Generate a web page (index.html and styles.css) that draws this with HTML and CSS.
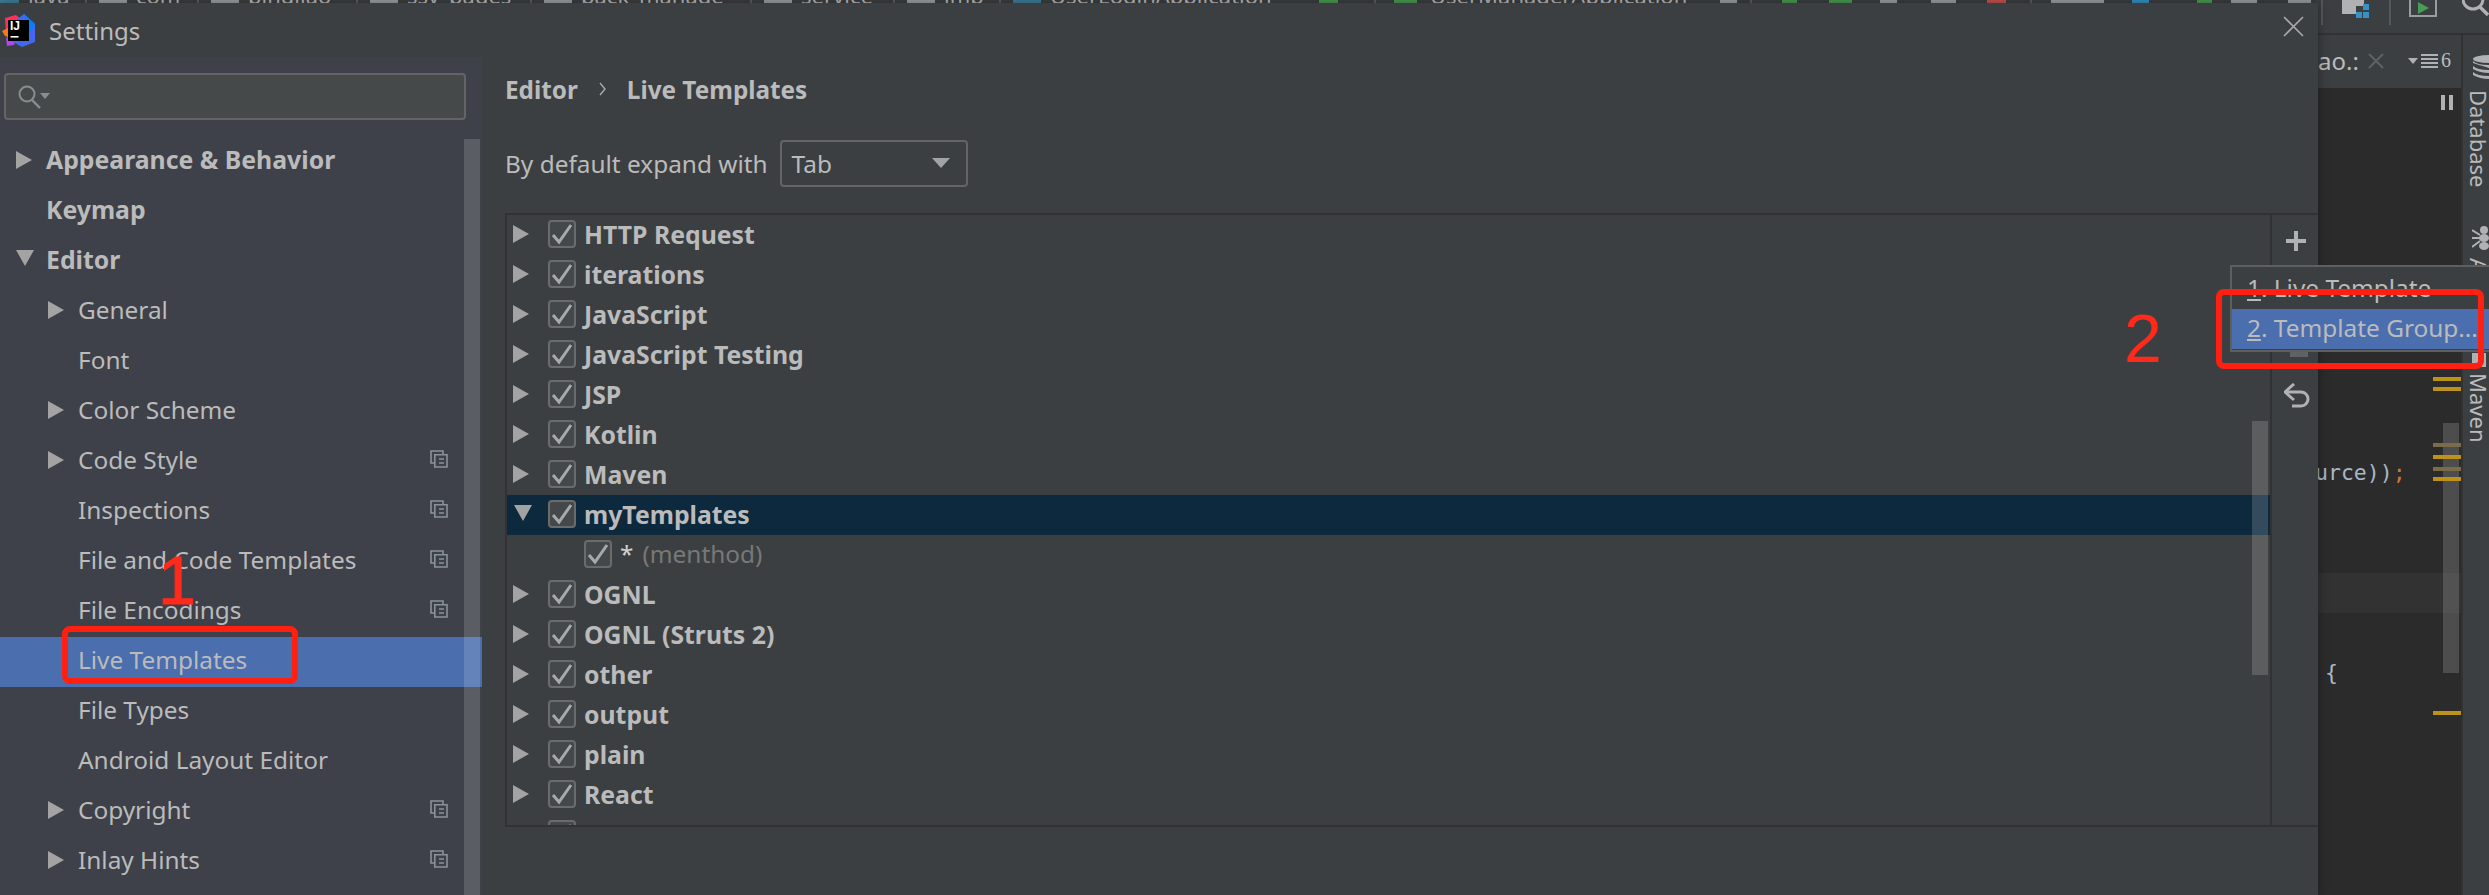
FILE: index.html
```html
<!DOCTYPE html>
<html lang="en">
<head>
    <meta charset="UTF-8">
    <title>Settings</title>
    <link rel="stylesheet" href="styles.css">
</head>
<body>
    <!-- Shared icons -->
    <svg class="sprite" width="0" height="0">
        <symbol id="check" viewBox="0 0 24 24">
            <path d="M3 13 L9 20 L21 3" fill="none" stroke="#a9a9a9" stroke-width="3"/>
        </symbol>
        <symbol id="project" viewBox="0 0 18 18">
            <path d="M13 4 V1 H1 V13 H4" fill="none" stroke="#8a9299" stroke-width="1.6"/>
            <path d="M4.8 4.8 H17 V17 H4.8 Z" fill="none" stroke="#8a9299" stroke-width="1.6"/>
            <path d="M9 9 H14 M9 13 H14" stroke="#8a9299" stroke-width="1.6"/>
        </symbol>
    </svg>

    <!-- IDE behind the dialog -->
    <div class="ide-toolbar">
        <span class="crumb-icon teal"></span>
        <span class="crumb-text wide-1">java</span>
        <span class="crumb-sep"></span>
        <span class="crumb-icon"></span>
        <span class="crumb-text wide-2">com</span>
        <span class="crumb-sep"></span>
        <span class="crumb-icon"></span>
        <span class="crumb-text wide-3">pingjiao</span>
        <span class="crumb-sep"></span>
        <span class="crumb-icon"></span>
        <span class="crumb-text wide-4">ssy_pages</span>
        <span class="crumb-sep"></span>
        <span class="crumb-icon"></span>
        <span class="crumb-text wide-5">back_manage</span>
        <span class="crumb-sep"></span>
        <span class="crumb-icon"></span>
        <span class="crumb-text wide-6">service</span>
        <span class="crumb-sep"></span>
        <span class="crumb-icon"></span>
        <span class="crumb-text wide-7">impl</span>
        <span class="crumb-sep"></span>
        <span class="crumb-icon teal"></span>
        <span class="crumb-text wide-8">UserLoginApplication</span>

        <span class="bit bit-run"></span>
        <span class="crumb-sep sep-run"></span>
        <span class="bit bit-config"></span>
        <span class="crumb-text wide-9">UserManagerApplication</span>
        <span class="bit bit-drop"></span>
        <span class="crumb-sep sep-drop"></span>
        <span class="bit bit-play"></span>
        <span class="bit bit-debug"></span>
        <span class="bit bit-cover"></span>
        <span class="bit bit-profile"></span>
        <span class="bit bit-stop"></span>
        <span class="crumb-sep sep-stop"></span>
        <span class="bit bit-vcs"></span>
        <span class="bit bit-update"></span>
        <span class="bit bit-commit"></span>
        <span class="bit bit-history"></span>
        <span class="bit bit-revert"></span>

        <div class="toolbar-right">
            <span class="tool-sep first-sep"></span>
            <svg class="toolbar-icon" width="27" height="18" viewBox="0 0 27 18">
                <path d="M0 0 H22 V6 H14 V14 H0 Z" fill="#afb1b3"/>
                <rect x="21" y="4" width="6" height="6" fill="#3592c4"/>
                <rect x="14" y="12" width="6" height="6" fill="#3592c4"/>
                <rect x="21" y="12" width="6" height="6" fill="#3592c4"/>
            </svg>
            <span class="tool-sep second-sep"></span>
            <svg class="toolbar-icon run-icon" width="28" height="17" viewBox="0 0 28 17">
                <path d="M1 0 V16 H27 V0" fill="none" stroke="#9a9c9e" stroke-width="2"/>
                <path d="M9 2 L20 8 L9 14 Z" fill="#499c54"/>
            </svg>
            <svg class="toolbar-icon search-icon" width="27" height="16" viewBox="0 0 27 16">
                <circle cx="11" cy="-1" r="10" fill="none" stroke="#afb1b3" stroke-width="3"/>
                <path d="M18 7 L26 15" stroke="#afb1b3" stroke-width="3.4"/>
            </svg>
        </div>
    </div>

    <div class="ide-main">
        <div class="editor-column">
            <div class="editor-tabs">
                <span class="tab-name">ao.:</span>
                <svg class="tab-close" width="16" height="16" viewBox="0 0 16 16">
                    <path d="M1 1 L15 15 M15 1 L1 15" stroke="#5f6264" stroke-width="2"/>
                </svg>
                <span class="tab-list-arrow"></span>
                <svg class="tab-list" width="17" height="14" viewBox="0 0 17 14">
                    <path d="M0 1 H17 M0 5 H17 M0 9 H17 M0 13 H17" stroke="#afb1b3" stroke-width="2"/>
                </svg>
                <span class="tab-count">6</span>
            </div>
            <div class="editor">
                <div class="code-line first-line"><span class="code-text">urce))</span><span class="code-semi">;</span></div>
                <div class="code-line"></div>
                <div class="code-line"></div>
                <div class="code-line caret-line"></div>
                <div class="code-line"></div>
                <div class="code-line brace-line"><span class="code-text">{</span></div>

                <span class="pause-icon"></span>
                <span class="editor-scroll"></span>
                <span class="mark mark-1"></span>
                <span class="mark mark-2"></span>
                <span class="mark mark-3"></span>
                <span class="mark mark-4"></span>
                <span class="mark mark-5"></span>
                <span class="mark mark-6"></span>
                <span class="mark mark-7"></span>
            </div>
        </div>
        <div class="tool-strip">
            <svg class="strip-db" width="17" height="25" viewBox="0 0 17 25">
                <ellipse cx="17" cy="4" rx="16" ry="4" fill="#afb1b3"/>
                <path d="M1 8 Q17 13 17 13 V10 Q5 10 1 6 Z M1 14 Q8 18 17 18 V15 Q5 15 1 11 Z M1 20 Q8 24 17 24 V21 Q5 21 1 17 Z" fill="#afb1b3"/>
            </svg>
            <span class="strip-label strip-database">Database</span>
            <svg class="strip-ant" width="17" height="25" viewBox="0 0 17 25">
                <circle cx="12" cy="5" r="4" fill="#afb1b3"/>
                <ellipse cx="12" cy="13" rx="5" ry="4" fill="#afb1b3"/>
                <ellipse cx="12" cy="21" rx="5" ry="4" fill="#afb1b3"/>
                <path d="M0 5 L8 10 M0 13 H8 M0 22 L8 16" stroke="#afb1b3" stroke-width="2"/>
            </svg>
            <span class="strip-label strip-ant-label">Ant</span>
            <span class="strip-maven-icon"></span>
            <span class="strip-label strip-maven">Maven</span>
        </div>
    </div>

    <!-- Settings dialog -->
    <div class="dialog">
        <div class="dialog-title">
            <svg class="app-logo" width="33" height="33" viewBox="0 0 33 33">
                <path d="M3 4 L14 1 L20 6 L9 26 L6 30 L4 18 Z" fill="#fe315d"/>
                <path d="M0 17 L6 14 L10 24 L3 22 Z" fill="#f97a12"/>
                <path d="M5 32 L4 24 L14 26 L12 31 Z" fill="#b345f1"/>
                <path d="M14 6 L22 0 L33 10 L33 28 L20 33 L11 28 Z" fill="#4168f0"/>
                <path d="M22 0 L33 10 L28 18 Z" fill="#087cfa"/>
                <rect x="6" y="6" width="21" height="21" fill="#000"/>
                <text class="logo-text" x="8" y="16">IJ</text>
                <rect x="8.5" y="22" width="8" height="1.6" fill="#fff"/>
            </svg>
            <span class="dialog-name">Settings</span>
            <svg class="dialog-close" width="21" height="21" viewBox="0 0 21 21">
                <path d="M1 1 L20 20 M20 1 L1 20" stroke="#a6a8aa" stroke-width="1.6"/>
            </svg>
        </div>

        <div class="dialog-body">
            <div class="sidebar">
                <div class="search-box">
                    <svg width="33" height="24" viewBox="0 0 33 24">
                        <circle cx="9" cy="9" r="7.5" fill="none" stroke="#8a8d8f" stroke-width="2"/>
                        <path d="M14 15 L22 23" stroke="#8a8d8f" stroke-width="2.4"/>
                        <path d="M22 8 H32 L27 14 Z" fill="#8a8d8f"/>
                    </svg>
                </div>
                <ul class="tree">
                    <li class="tree-row top-level"><i class="arrow"></i><span class="bold">Appearance &amp; Behavior</span></li>
                    <li class="tree-row top-level"><span class="bold">Keymap</span></li>
                    <li class="tree-row top-level"><i class="arrow open"></i><span class="bold">Editor</span></li>
                    <li class="tree-row"><i class="arrow"></i><span>General</span></li>
                    <li class="tree-row"><span>Font</span></li>
                    <li class="tree-row"><i class="arrow"></i><span>Color Scheme</span></li>
                    <li class="tree-row"><i class="arrow"></i><span>Code Style</span><svg class="project-icon"><use href="#project"/></svg></li>
                    <li class="tree-row"><span>Inspections</span><svg class="project-icon"><use href="#project"/></svg></li>
                    <li class="tree-row"><span>File and Code Templates</span><svg class="project-icon"><use href="#project"/></svg></li>
                    <li class="tree-row"><span>File Encodings</span><svg class="project-icon"><use href="#project"/></svg></li>
                    <li class="tree-row selected"><span>Live Templates</span></li>
                    <li class="tree-row"><span>File Types</span></li>
                    <li class="tree-row"><span>Android Layout Editor</span></li>
                    <li class="tree-row"><i class="arrow"></i><span>Copyright</span><svg class="project-icon"><use href="#project"/></svg></li>
                    <li class="tree-row"><i class="arrow"></i><span>Inlay Hints</span><svg class="project-icon"><use href="#project"/></svg></li>
                </ul>
                <div class="sidebar-scroll"></div>
            </div>

            <div class="content">
                <div class="breadcrumb">
                    <span class="bold">Editor</span>
                    <svg width="7" height="14" viewBox="0 0 7 14">
                        <path d="M1 1 L6 7 L1 13" fill="none" stroke="#a8aaac" stroke-width="1.4"/>
                    </svg>
                    <span class="bold">Live Templates</span>
                </div>
                <div class="expand-row">
                    <span>By default expand with</span>
                    <div class="select-box"><span>Tab</span><i class="select-arrow"></i></div>
                </div>

                <div class="panel">
                    <div class="group-list">
                        <div class="group-row"><i class="arrow"></i><span class="check"><svg><use href="#check"/></svg></span><span class="bold">HTTP Request</span></div>
                        <div class="group-row"><i class="arrow"></i><span class="check"><svg><use href="#check"/></svg></span><span class="bold">iterations</span></div>
                        <div class="group-row"><i class="arrow"></i><span class="check"><svg><use href="#check"/></svg></span><span class="bold">JavaScript</span></div>
                        <div class="group-row"><i class="arrow"></i><span class="check"><svg><use href="#check"/></svg></span><span class="bold">JavaScript Testing</span></div>
                        <div class="group-row"><i class="arrow"></i><span class="check"><svg><use href="#check"/></svg></span><span class="bold">JSP</span></div>
                        <div class="group-row"><i class="arrow"></i><span class="check"><svg><use href="#check"/></svg></span><span class="bold">Kotlin</span></div>
                        <div class="group-row"><i class="arrow"></i><span class="check"><svg><use href="#check"/></svg></span><span class="bold">Maven</span></div>
                        <div class="group-row active"><i class="arrow open"></i><span class="check"><svg><use href="#check"/></svg></span><span class="bold">myTemplates</span></div>
                        <div class="group-row child"><span class="check"><svg><use href="#check"/></svg></span><span class="star">*</span><span class="muted">(menthod)</span></div>
                        <div class="group-row"><i class="arrow"></i><span class="check"><svg><use href="#check"/></svg></span><span class="bold">OGNL</span></div>
                        <div class="group-row"><i class="arrow"></i><span class="check"><svg><use href="#check"/></svg></span><span class="bold">OGNL (Struts 2)</span></div>
                        <div class="group-row"><i class="arrow"></i><span class="check"><svg><use href="#check"/></svg></span><span class="bold">other</span></div>
                        <div class="group-row"><i class="arrow"></i><span class="check"><svg><use href="#check"/></svg></span><span class="bold">output</span></div>
                        <div class="group-row"><i class="arrow"></i><span class="check"><svg><use href="#check"/></svg></span><span class="bold">plain</span></div>
                        <div class="group-row"><i class="arrow"></i><span class="check"><svg><use href="#check"/></svg></span><span class="bold">React</span></div>
                        <div class="group-row"><i class="arrow"></i><span class="check"><svg><use href="#check"/></svg></span><span class="bold">RESTful Web Service</span></div>
                        <div class="list-scroll"></div>
                    </div>
                    <div class="panel-tools">
                        <svg class="tool-plus" width="20" height="20" viewBox="0 0 20 20">
                            <path d="M10 0 V20 M0 10 H20" stroke="#afb1b3" stroke-width="4"/>
                        </svg>
                        <span class="tool-minus"></span>
                        <svg class="tool-undo" width="26" height="26" viewBox="0 0 26 26">
                            <path d="M3 9 H17 A 7 7 0 0 1 17 23 H8" fill="none" stroke="#afb1b3" stroke-width="3"/>
                            <path d="M10 1 L1 9 L10 17" fill="none" stroke="#afb1b3" stroke-width="3"/>
                        </svg>
                    </div>
                </div>
            </div>
        </div>
    </div>

    <!-- Add menu -->
    <div class="add-menu">
        <div class="menu-item"><u>1</u>. Live Template</div>
        <div class="menu-item current"><u>2</u>. Template Group...</div>
    </div>

    <!-- Red annotations -->
    <span class="note note-one">1</span>
    <span class="note note-two">2</span>
    <div class="note-box box-one"></div>
    <div class="note-box box-two"></div>
</body>
</html>
```

FILE: styles.css
```css
/* Reset */
* {
    margin: 0;
    padding: 0;
    box-sizing: border-box;
}
body {
    position: relative;
    width: 2489px;
    height: 895px;
    overflow: hidden;
    background-color: #3c3f41;
    color: #bbbbbb;
    font-family: "Noto Sans", "Open Sans", sans-serif;
    font-size: 24.4px;
}
.sprite {
    position: absolute;
}
.bold {
    font-size: 24.8px;
    font-weight: 700;
}

/* IDE toolbar, mostly covered by the dialog */
.ide-toolbar {
    display: flex;
    align-items: flex-start;
    height: 35px;
    border-bottom: 2px solid #323232;
    overflow: hidden;
}
.crumb-icon {
    flex: none;
    width: 28px;
    height: 20px;
    background-color: #9da0a2;
}
.crumb-icon.teal {
    background-color: #3f7f9c;
}
.crumb-icon:first-child {
    width: 19px;
}
.crumb-text {
    flex: none;
    margin: -20px 0 0 9px;
    font-size: 22px;
    line-height: 30px;
    white-space: nowrap;
    overflow: hidden;
}
.wide-1 { width: 42px; }
.wide-2 { width: 46px; }
.wide-3 { width: 93px; }
.wide-4 { width: 108px; }
.wide-5 { width: 154px; }
.wide-6 { width: 77px; }
.wide-7 { width: 40px; }
.wide-8 { width: 224px; }
.wide-9 { width: 269px; margin-left: 13px; }
.crumb-sep {
    flex: none;
    width: 2px;
    height: 4px;
    margin: 0 12px 0 15px;
    background-color: #5c5f61;
}
.bit {
    flex: none;
    height: 8px;
    background-color: #9da0a2;
}
.bit-run { width: 19px; margin-left: 45px; background-color: #499c54; }
.sep-run { margin: 0 18px 0 36px; }
.bit-config { width: 23px; background-color: #499c54; }
.bit-drop { width: 17px; margin-left: 21px; height: 3px; }
.sep-drop { margin: 0 30px 0 13px; }
.bit-play { width: 15px; background-color: #499c54; }
.bit-debug { width: 23px; margin-left: 32px; background-color: #499c54; }
.bit-cover { width: 17px; margin-left: 28px; }
.bit-profile { width: 25px; margin-left: 34px; height: 4px; }
.bit-stop { width: 19px; margin-left: 31px; background-color: #c75450; }
.sep-stop { margin: 0 19px 0 24px; }
.bit-vcs { width: 53px; height: 4px; }
.bit-update { width: 17px; margin-left: 28px; background-color: #3592c4; }
.bit-commit { width: 15px; margin-left: 48px; background-color: #499c54; }
.bit-history { width: 26px; margin-left: 19px; height: 4px; }
.bit-revert { width: 23px; margin-left: 31px; height: 4px; }
.toolbar-right {
    display: flex;
    align-items: flex-start;
    margin-left: auto;
}
.tool-sep {
    width: 2px;
    height: 25px;
    background-color: #555759;
}
.first-sep {
    margin-right: 19px;
}
.second-sep {
    margin: 0 18px 0 20px;
}
.run-icon {
    margin-right: 25px;
}

/* Editor column and tool window strip */
.ide-main {
    display: flex;
    justify-content: flex-end;
    height: 860px;
}
.editor-column {
    display: flex;
    flex-direction: column;
    width: 143px;
}
.editor-tabs {
    display: flex;
    align-items: center;
    height: 53px;
    padding-bottom: 2px;
    font-size: 24px;
}
.tab-name {
    width: 50px;
}
.tab-close {
    margin-right: 24px;
}
.tab-list-arrow {
    width: 0;
    height: 0;
    margin-right: 3px;
    border-left: 5px solid transparent;
    border-right: 5px solid transparent;
    border-top: 6px solid #afb1b3;
}
.tab-count {
    margin-left: 3px;
    font-family: "Liberation Serif", serif;
    font-size: 20px;
}
.editor {
    position: relative;
    flex: 1;
    padding-top: 365px;
    background-color: #2b2b2b;
    font-family: "DejaVu Sans Mono", monospace;
    font-size: 21.5px;
}
.code-line {
    height: 40px;
    line-height: 40px;
    white-space: nowrap;
}
.first-line {
    margin-left: -3px;
}
.code-text {
    color: #a9b7c6;
}
.code-semi {
    color: #cc7832;
}
.caret-line {
    background-color: #323232;
}
.brace-line {
    padding-left: 7px;
}
.pause-icon {
    position: absolute;
    top: 7px;
    left: 123px;
    width: 12px;
    height: 15px;
    border-left: 4px solid #afb1b3;
    border-right: 4px solid #afb1b3;
}
.editor-scroll {
    position: absolute;
    top: 335px;
    left: 125px;
    width: 16px;
    height: 250px;
    background-color: rgba(255, 255, 255, 0.16);
}
.mark {
    position: absolute;
    left: 115px;
    width: 28px;
    height: 4px;
    background-color: #be9117;
}
.mark-1 { top: 289px; }
.mark-2 { top: 299px; }
.mark-3 { top: 355px; background-color: #7a6c4a; }
.mark-4 { top: 367px; }
.mark-5 { top: 379px; background-color: #7a6c4a; }
.mark-6 { top: 389px; }
.mark-7 { top: 623px; }
.tool-strip {
    display: flex;
    flex-direction: column;
    width: 28px;
    padding-left: 9px;
    border-left: 2px solid #323232;
    overflow: hidden;
}
.strip-db {
    flex: none;
    margin-top: 20px;
}
.strip-label {
    flex: none;
    writing-mode: vertical-rl;
    font-size: 22px;
    line-height: 20px;
}
.strip-database {
    margin-top: 10px;
}
.strip-ant {
    flex: none;
    margin-top: 37px;
}
.strip-ant-label {
    margin-top: 8px;
}
.strip-maven-icon {
    flex: none;
    width: 14px;
    height: 14px;
    margin-top: 60px;
    background-color: #afb1b3;
}
.strip-maven {
    margin-top: 6px;
}

/* Dialog */
.dialog {
    position: absolute;
    top: 3px;
    left: 0;
    display: flex;
    flex-direction: column;
    width: 2318px;
    height: 892px;
    background-color: #3c3f41;
    box-shadow: 0 0 10px rgba(0, 0, 0, 0.4);
}
.dialog-title {
    display: flex;
    align-items: center;
    flex: none;
    height: 54px;
    padding-left: 2px;
}
.dialog-name {
    margin-left: 14px;
    font-size: 24px;
}
.dialog-close {
    margin-left: auto;
    margin-right: 14px;
    margin-top: -8px;
}
.dialog-body {
    display: flex;
    flex: 1;
    min-height: 0;
}

/* Sidebar */
.sidebar {
    position: relative;
    flex: none;
    width: 482px;
    background-color: #3e4149;
}
.search-box {
    display: flex;
    align-items: center;
    width: 462px;
    height: 47px;
    margin: 16px 0 17px 4px;
    padding-left: 12px;
    background-color: #45494a;
    border: 2px solid #646464;
    border-radius: 4px;
}
.tree {
    list-style: none;
}
.tree-row {
    position: relative;
    display: flex;
    align-items: center;
    height: 50px;
    padding: 0 0 6px 78px;
}
.tree-row.top-level {
    padding-left: 46px;
}
.tree-row.selected {
    background-color: #4b6eaf;
}
.arrow {
    position: absolute;
    left: 48px;
    top: 50%;
    width: 0;
    height: 0;
    margin-top: -11px;
    border-top: 9px solid transparent;
    border-bottom: 9px solid transparent;
    border-left: 16px solid #a3a3a3;
}
.top-level .arrow {
    left: 16px;
}
.arrow.open {
    margin-top: -12px;
    border-top: 16px solid #a3a3a3;
    border-bottom: 0;
    border-left: 9px solid transparent;
    border-right: 9px solid transparent;
}
.project-icon {
    position: absolute;
    left: 430px;
    top: 13px;
    width: 18px;
    height: 18px;
}
.sidebar-scroll {
    position: absolute;
    top: 82px;
    left: 464px;
    width: 16px;
    bottom: 0;
    background-color: rgba(255, 255, 255, 0.15);
}

/* Live templates page */
.content {
    display: flex;
    flex-direction: column;
    flex: 1;
    min-width: 0;
    padding-left: 23px;
}
.breadcrumb {
    display: flex;
    align-items: center;
    gap: 21px;
    height: 34px;
    margin-top: 15px;
}
.breadcrumb .bold {
    font-size: 24.3px;
}
.expand-row {
    display: flex;
    align-items: center;
    height: 46px;
    margin-top: 34px;
}
.select-box {
    display: flex;
    align-items: center;
    justify-content: space-between;
    width: 188px;
    height: 47px;
    margin-left: 12px;
    padding: 0 16px 0 10px;
    border: 2px solid #646464;
    border-radius: 4px;
}
.select-arrow {
    width: 0;
    height: 0;
    border-left: 9px solid transparent;
    border-right: 9px solid transparent;
    border-top: 10px solid #a3a3a3;
}
.panel {
    display: flex;
    height: 614px;
    margin-top: 27px;
    border-top: 2px solid #323232;
    border-bottom: 2px solid #323232;
    border-left: 2px solid #323232;
}
.group-list {
    position: relative;
    flex: 1;
    min-width: 0;
    overflow: hidden;
}
.group-row {
    position: relative;
    display: flex;
    align-items: center;
    height: 40px;
    padding: 0 0 3px 41px;
}
.group-row .arrow {
    left: 6px;
    margin-top: -10px;
}
.group-row .arrow.open {
    left: 7px;
    margin-top: -10px;
}
.group-row.active {
    background-color: #0d293e;
}
.group-row.child {
    padding-left: 77px;
}
.check {
    flex: none;
    width: 28px;
    height: 28px;
    margin-right: 8px;
    background-color: #43494a;
    border: 2px solid #6b6b6b;
    border-radius: 4px;
}
.check svg {
    display: block;
    width: 24px;
    height: 24px;
}
.star {
    margin-right: 9px;
    color: #d0d0d0;
}
.muted {
    color: #787878;
}
.list-scroll {
    position: absolute;
    top: 206px;
    right: 2px;
    width: 16px;
    height: 254px;
    background-color: rgba(255, 255, 255, 0.16);
}
.panel-tools {
    position: relative;
    flex: none;
    width: 48px;
    border-left: 2px solid #323232;
}
.tool-plus {
    position: absolute;
    top: 16px;
    left: 14px;
}
.tool-minus {
    position: absolute;
    top: 137px;
    left: 18px;
    width: 18px;
    height: 5px;
    background-color: #5f6163;
}
.tool-undo {
    position: absolute;
    top: 168px;
    left: 12px;
}

/* Add menu */
.add-menu {
    position: absolute;
    top: 265px;
    left: 2230px;
    width: 270px;
    height: 87px;
    background-color: #3c3f41;
    border: 2px solid #5e6060;
}
.menu-item {
    height: 42px;
    padding-left: 15px;
    line-height: 42px;
    white-space: nowrap;
}
.menu-item.current {
    height: 40px;
    line-height: 38px;
    background-color: #4b6eaf;
}

/* Red annotations */
.note {
    position: absolute;
    color: #ff2a1a;
    font-family: "Liberation Sans", sans-serif;
    line-height: 1;
}
.note-one {
    top: 546px;
    left: 158px;
    font-size: 68px;
    -webkit-text-stroke: 1px #ff2a1a;
}
.note-two {
    top: 304px;
    left: 2124px;
    font-size: 68px;
}
.note-box {
    position: absolute;
    border: 6px solid #ff2012;
    border-radius: 8px;
}
.box-one {
    top: 626px;
    left: 62px;
    width: 236px;
    height: 58px;
}
.box-two {
    top: 289px;
    left: 2216px;
    width: 268px;
    height: 80px;
}
.logo-text {
    fill: #ffffff;
    font-family: "Liberation Sans", sans-serif;
    font-size: 12px;
    font-weight: 700;
}
```
